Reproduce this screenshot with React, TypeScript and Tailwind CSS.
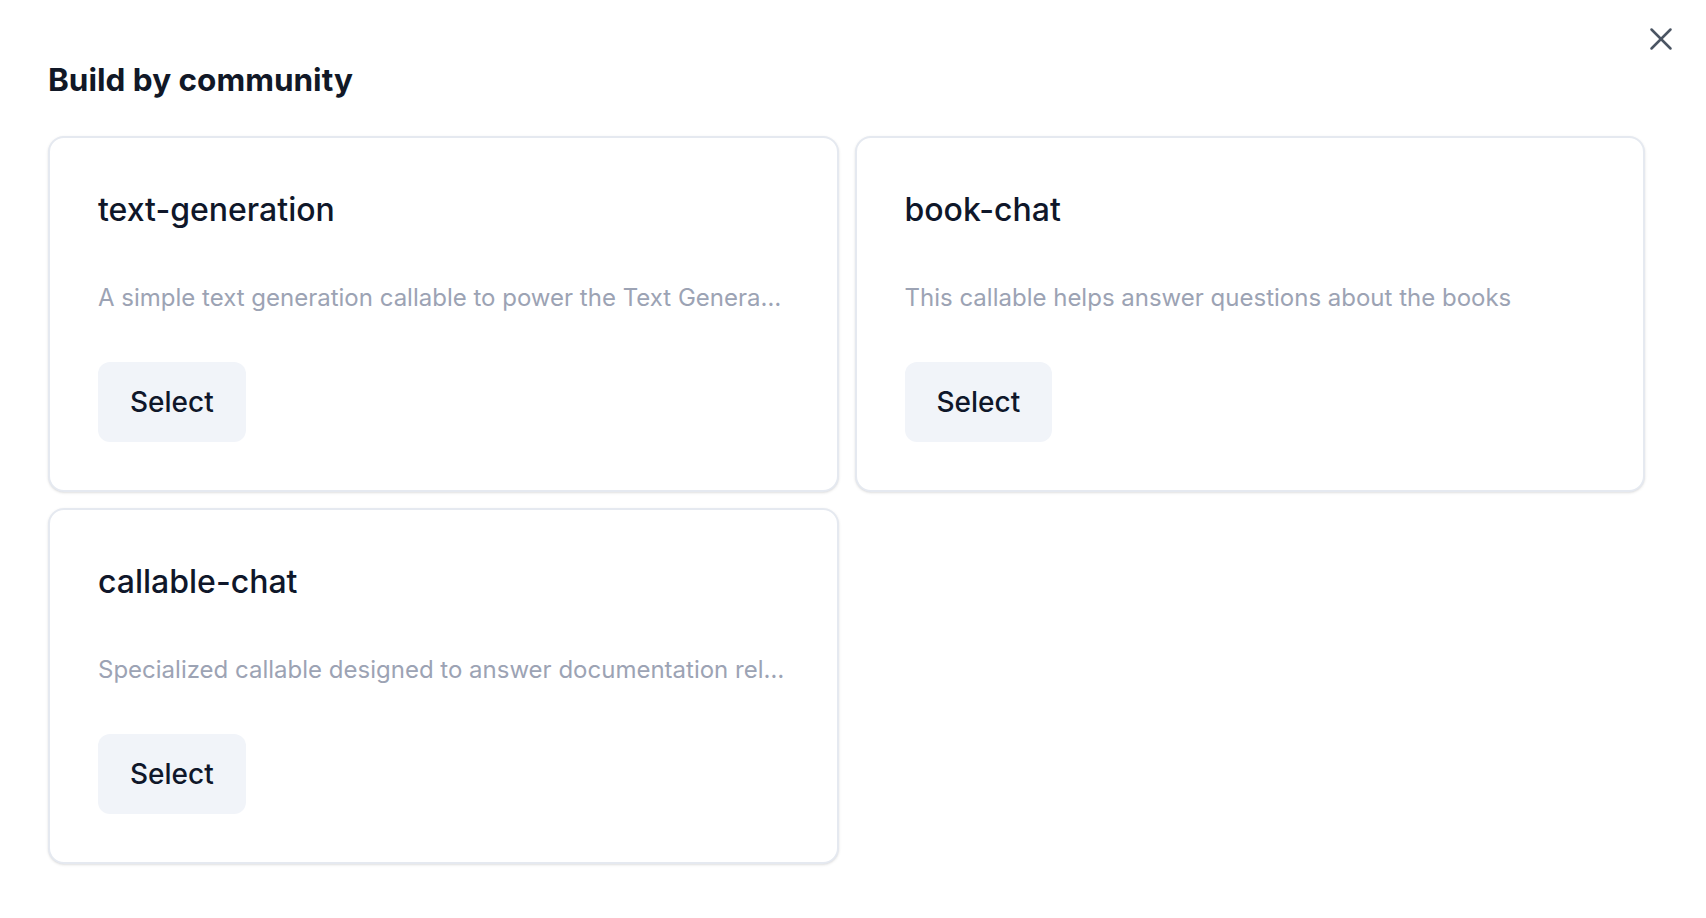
import { X } from "lucide-react";

const callables = [
  {
    name: "text-generation",
    description: "A simple text generation callable to power the Text Generation template and other generic text generation needs",
  },
  {
    name: "book-chat",
    description: "This callable helps answer questions about the books",
  },
  {
    name: "callable-chat",
    description: "Specialized callable designed to answer documentation related questions for the platform",
  },
];

function CallableCard({ name, description }: { name: string; description: string }) {
  return (
    <div className="flex flex-col rounded-2xl border-2 border-[#e5e9f0] bg-white px-12 pt-12 pb-12 shadow-sm">
      <h3 className="text-[32px] leading-[48px] font-medium text-[#0f172a]">{name}</h3>
      <p className="mt-12 truncate text-[24px] leading-[32px] text-[#9ca3b4]">{description}</p>
      <div className="mt-12">
        <button className="h-20 rounded-xl bg-[#f1f4f9] px-8 text-[28px] font-medium text-[#0f172a]">
          Select
        </button>
      </div>
    </div>
  );
}

export default function App() {
  return (
    <div
      className="relative h-[918px] w-full bg-white"
      style={{ fontFamily: "Inter, 'Noto Sans', sans-serif" }}
    >
      <button className="absolute right-[26px] top-[20px] text-[#4b5563]">
        <X className="h-[38px] w-[38px]" strokeWidth={1.6} />
      </button>
      <div className="pl-12 pt-[60px]">
        <h2 className="text-[31.5px] leading-[40px] font-bold text-[#111827]">Build by community</h2>
        <div className="mt-[36px] grid w-[1597px] grid-cols-2 gap-4">
          {callables.map((c) => (
            <CallableCard key={c.name} {...c} />
          ))}
        </div>
      </div>
    </div>
  );
}
